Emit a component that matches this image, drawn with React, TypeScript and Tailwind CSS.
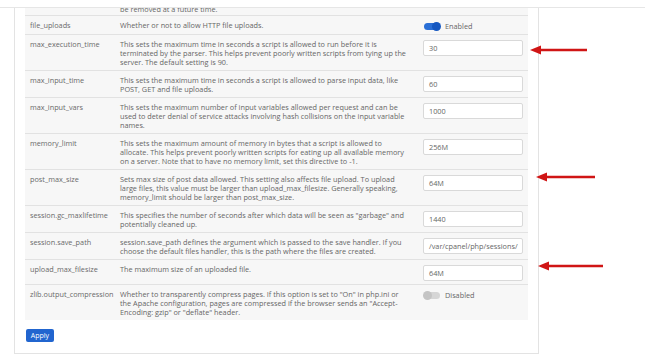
import React from "react";

type Control =
  | { kind: "toggle"; on: boolean }
  | { kind: "input"; value: string };

type Row = { name: string; lines: string[]; control: Control };

const rows: Row[] = [
  {
    name: "file_uploads",
    lines: ["Whether or not to allow HTTP file uploads."],
    control: { kind: "toggle", on: true },
  },
  {
    name: "max_execution_time",
    lines: [
      "This sets the maximum time in seconds a script is allowed to run before it is",
      "terminated by the parser. This helps prevent poorly written scripts from tying up the",
      "server. The default setting is 90.",
    ],
    control: { kind: "input", value: "30" },
  },
  {
    name: "max_input_time",
    lines: [
      "This sets the maximum time in seconds a script is allowed to parse input data, like",
      "POST, GET and file uploads.",
    ],
    control: { kind: "input", value: "60" },
  },
  {
    name: "max_input_vars",
    lines: [
      "This sets the maximum number of input variables allowed per request and can be",
      "used to deter denial of service attacks involving hash collisions on the input variable",
      "names.",
    ],
    control: { kind: "input", value: "1000" },
  },
  {
    name: "memory_limit",
    lines: [
      "This sets the maximum amount of memory in bytes that a script is allowed to",
      "allocate. This helps prevent poorly written scripts for eating up all available memory",
      "on a server. Note that to have no memory limit, set this directive to -1.",
    ],
    control: { kind: "input", value: "256M" },
  },
  {
    name: "post_max_size",
    lines: [
      "Sets max size of post data allowed. This setting also affects file upload. To upload",
      "large files, this value must be larger than upload_max_filesize. Generally speaking,",
      "memory_limit should be larger than post_max_size.",
    ],
    control: { kind: "input", value: "64M" },
  },
  {
    name: "session.gc_maxlifetime",
    lines: [
      'This specifies the number of seconds after which data will be seen as "garbage" and',
      "potentially cleaned up.",
    ],
    control: { kind: "input", value: "1440" },
  },
  {
    name: "session.save_path",
    lines: [
      "session.save_path defines the argument which is passed to the save handler. If you",
      "choose the default files handler, this is the path where the files are created.",
    ],
    control: { kind: "input", value: "/var/cpanel/php/sessions/" },
  },
  {
    name: "upload_max_filesize",
    lines: ["The maximum size of an uploaded file."],
    control: { kind: "input", value: "64M" },
  },
  {
    name: "zlib.output_compression",
    lines: [
      'Whether to transparently compress pages. If this option is set to "On" in php.ini or',
      'the Apache configuration, pages are compressed if the browser sends an "Accept-',
      'Encoding: gzip" or "deflate" header.',
    ],
    control: { kind: "toggle", on: false },
  },
];

const Toggle = ({ on }: { on: boolean }) => (
  <div className="flex items-center gap-[5px]">
    {on ? (
      <span className="relative block h-[7px] w-[16px] rounded-full bg-[#2a6fd6]">
        <span className="absolute right-[-1px] top-[-1px] h-[9px] w-[9px] rounded-full bg-[#1557c0]" />
      </span>
    ) : (
      <span className="relative block h-[7px] w-[16px] rounded-full bg-[#d6d6d6]">
        <span className="absolute left-[-1px] top-[-1px] h-[9px] w-[9px] rounded-full bg-[#c4c4c4]" />
      </span>
    )}
    <span className="text-[#666]">{on ? "Enabled" : "Disabled"}</span>
  </div>
);

const Arrow = ({ top, left, width }: { top: number; left: number; width: number }) => (
  <svg
    className="absolute"
    style={{ top, left }}
    width={width}
    height={10}
    viewBox={`0 0 ${width} 10`}
  >
    <line x1={8} y1={5} x2={width} y2={5} stroke="#d01515" strokeWidth={2.5} />
    <polygon points="0,5 11,0.5 11,9.5" fill="#d01515" />
  </svg>
);

export default function App() {
  return (
    <div
      className="relative h-[355px] w-[645px] overflow-hidden bg-white text-[7.3px] leading-[9px] text-[#666]"
      style={{ fontFamily: '"Open Sans", "Liberation Sans", sans-serif' }}
    >
      {/* page header edge */}
      <div className="h-[8px] border-b border-[#e6e6e6] bg-white" />

      {/* settings panel */}
      <div className="ml-[14px] w-[525px] border-x border-b border-[#e3e3e3] pb-[11px] pl-[10px]">
        <div className="w-[503px] bg-[#f7f7f7]">
          {/* tail of the previous row */}
          <div className="flex h-[7px] overflow-hidden">
            <div className="w-[90px]" />
            <div className="-mt-[3px] pl-[5px]">be removed at a future time.</div>
          </div>

          {rows.map((row) => (
            <div key={row.name} className="flex border-t border-[#e2e2e2]">
              <div className="w-[90px] shrink-0 whitespace-nowrap pb-[3px] pl-[5px] pt-[5px] text-[#6a6a6a]">
                {row.name}
              </div>
              <div className="w-[303px] shrink-0 pb-[3px] pl-[5px] pt-[5px]">
                {row.lines.map((line, i) => (
                  <div key={i} className="whitespace-nowrap">
                    {line}
                  </div>
                ))}
              </div>
              <div className="w-[110px] shrink-0 pb-[3px] pl-[5px] pr-[5px] pt-[5px]">
                {row.control.kind === "toggle" ? (
                  <div className="pl-[1px] pt-[1px]">
                    <Toggle on={row.control.on} />
                  </div>
                ) : (
                  <div className="flex h-[16px] w-[100px] items-center overflow-hidden whitespace-nowrap rounded-[2px] border border-[#d9d9d9] bg-white pl-[5px] text-[#666]">
                    {row.control.value}
                  </div>
                )}
              </div>
            </div>
          ))}
        </div>

        <button className="ml-[1px] mt-[9px] flex h-[13px] w-[28px] items-center justify-center rounded-[2px] bg-[#2165cf] text-[7px] text-white">
          Apply
        </button>
      </div>

      <Arrow top={45} left={530} width={57} />
      <Arrow top={172} left={536} width={59} />
      <Arrow top={261} left={538} width={65} />
    </div>
  );
}
